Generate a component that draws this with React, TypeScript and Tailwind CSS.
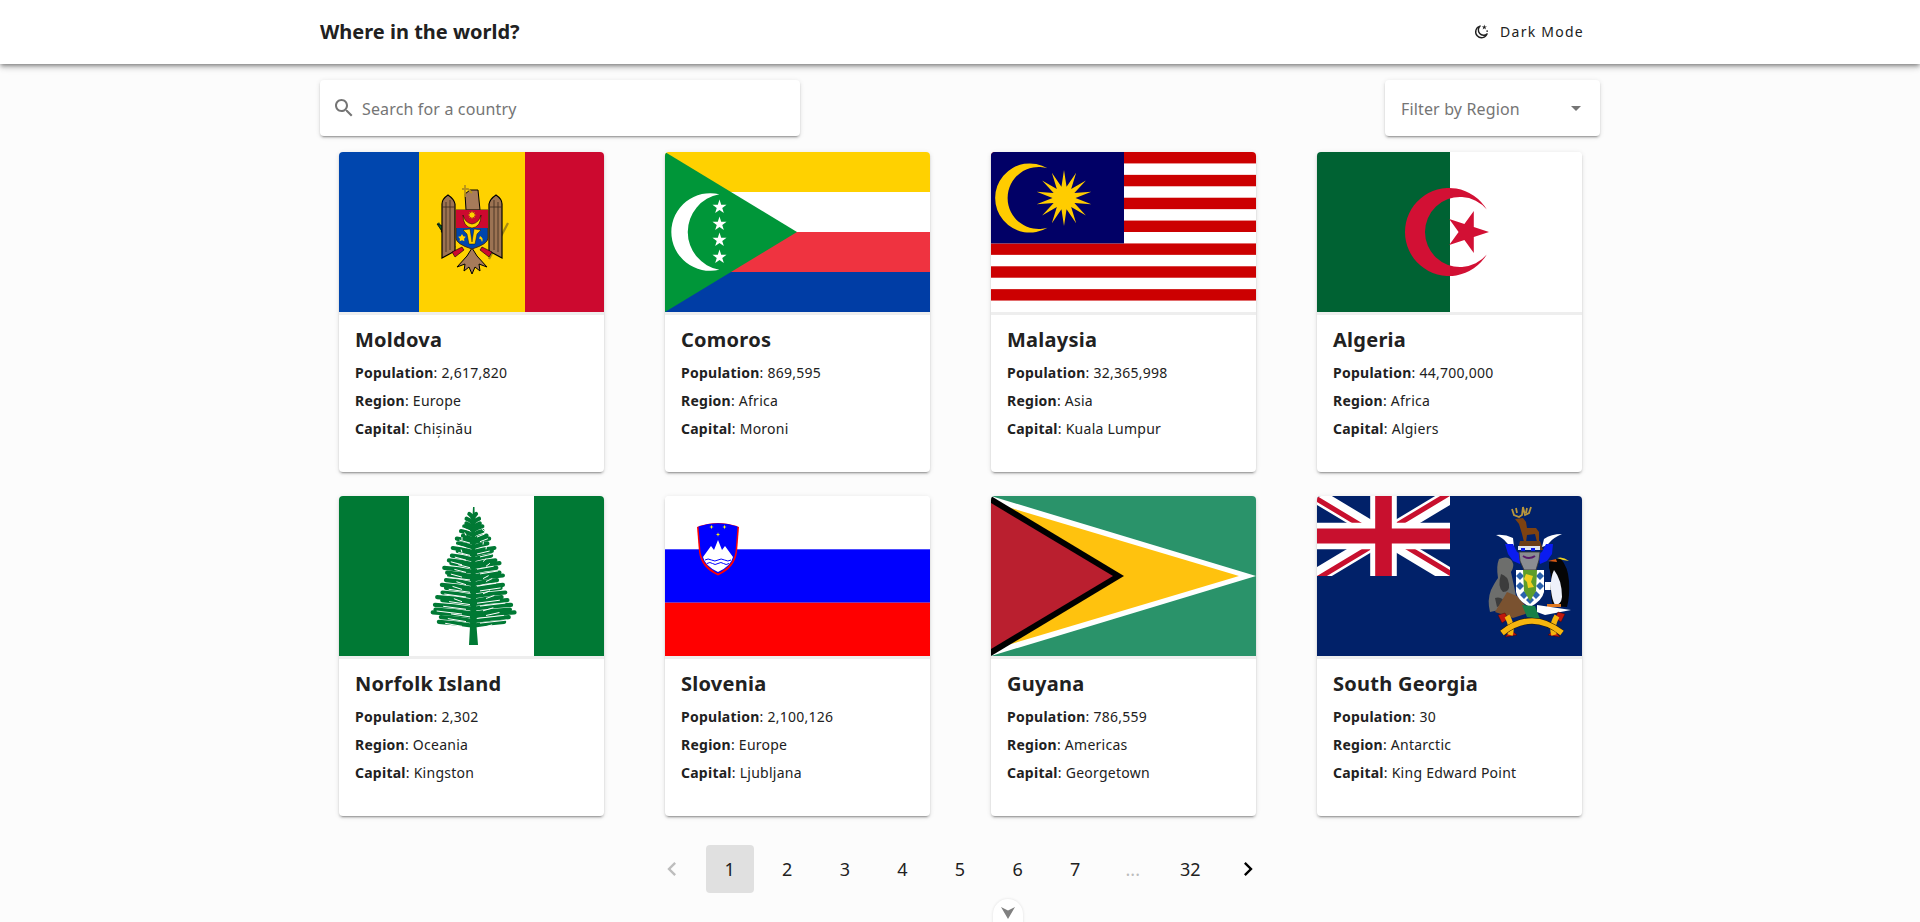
import type { ReactNode } from "react";

// all flags are drawn in a 265x160 box, same as the card image
const Flag = ({ children }: { children: ReactNode }) => (
  <svg viewBox="0 0 265 160" className="block w-[265px] h-[160px]">
    {children}
  </svg>
);

const star = (cx: number, cy: number, R: number, r: number, n: number, rot = -90) => {
  const pts: string[] = [];
  for (let i = 0; i < n * 2; i++) {
    const a = ((rot + (i * 180) / n) * Math.PI) / 180;
    const d = i % 2 === 0 ? R : r;
    pts.push(`${(cx + d * Math.cos(a)).toFixed(2)},${(cy + d * Math.sin(a)).toFixed(2)}`);
  }
  return pts.join(" ");
};

const MoldovaFlag = () => (
  <Flag>
    <rect width="80" height="160" fill="#0046ae" />
    <rect x="80" width="106" height="160" fill="#ffd200" />
    <rect x="186" width="79" height="160" fill="#cc092f" />
    {/* olive branch and sceptre */}
    <path d="M99 71 L116 100" stroke="#1f4b2a" strokeWidth="2.500" />
    <path d="M98 72l6 2-1 5zM102 79l6 2-1 6zM106 86l6 2-1 6zM110 93l6 1-1 6z" fill="#0b5a2c" stroke="#000" strokeWidth=".6" />
    <path d="M169 71 L150 107" stroke="#a88a10" strokeWidth="2.200" />
    {/* wings */}
    <path d="M103 106 V52 Q103 47 109 43 Q115 47 116 52 V99 Z" fill="#9c7353" stroke="#000" strokeWidth="1.200" />
    <path d="M163 106 V52 Q163 47 157 43 Q151 47 150 52 V99 Z" fill="#9c7353" stroke="#000" strokeWidth="1.200" />
    <path d="M107 50V100M111 48V98M155 48V98M159 50V100M103 55H116M150 55H163" stroke="#3b2a1c" strokeWidth=".8" />
    {/* head and cross */}
    <path d="M126 42 L131 38 L139 38 L141 58 L127 58 Z" fill="#a77b5a" stroke="#000" strokeWidth="1" />
    <path d="M126 33V45M123 37H129L133 41" stroke="#b8941a" strokeWidth="1.800" fill="none" />
    {/* tail */}
    <path d="M118 115 L128 104 L133 96 L138 104 L148 115 L140 112 L141 119 L136 115 L133 122 L130 115 L125 119 L126 112 Z" fill="#a77b5a" stroke="#000" strokeWidth="1" />
    <path d="M113 100l10-5 2 3-9 7zM153 100l-10-5-2 3 9 7z" fill="#cc092f" stroke="#000" strokeWidth=".6" />
    {/* shield */}
    <path d="M117 58 H149 V86 Q149 92 133 97 Q117 92 117 86 Z" fill="#0046ae" stroke="#4a2c14" strokeWidth="1" />
    <path d="M117 58 H149 V76 H117 Z" fill="#cc092f" />
    <path d="M124 63 Q124 75 133 76 Q142 75 142 63 Q140 71 133 72 Q126 71 124 63Z" fill="#ffd200" stroke="#000" strokeWidth=".5" />
    <polygon points={star(133, 63, 4.5, 2.5, 8)} fill="#ffd200" stroke="#a01818" strokeWidth=".5" />
    <path d="M124 78 L131 77 L133 90 L135 77 L142 78 L138 82 L136 92 H130 L128 82 Z" fill="#ffd200" stroke="#000" strokeWidth=".4" />
    <polygon points={star(123, 86, 4, 2.2, 5)} fill="#ffd200" />
    <path d="M141 84 q4 2 2 6 q-1-4-3-3z" fill="#ffd200" />
  </Flag>
);

const ComorosFlag = () => (
  <Flag>
    <rect width="265" height="40" fill="#ffd100" />
    <rect y="40" width="265" height="40" fill="#ffffff" />
    <rect y="80" width="265" height="40" fill="#ef3340" />
    <rect y="120" width="265" height="40" fill="#003da5" />
    <polygon points="0,0 132,80 0,160" fill="#009639" />
    <path d="M54.3 42.3 A38.8 38.8 0 1 0 54.3 117.7 A38.3 38.3 0 0 1 54.3 42.3Z" fill="#fff" />
    {[55, 72, 88, 105].map((y) => (
      <polygon key={y} points={star(54.5, y, 7.4, 2.9, 5)} fill="#fff" />
    ))}
  </Flag>
);

const MalaysiaFlag = () => (
  <Flag>
    <rect width="265" height="160" fill="#fff" />
    {Array.from({ length: 7 }, (_, i) => (
      <rect key={i} y={(i * 160) / 7} width="265" height={160 / 14} fill="#cc0001" />
    ))}
    <rect width="133" height="91.4" fill="#010066" />
    <path d="M56.5 16.3 A34.6 34.6 0 1 0 56.5 75.7 A31 31 0 1 1 56.5 16.3Z" fill="#ffcc00" />
    <polygon points={star(73, 46, 28, 11.5, 14)} fill="#ffcc00" />
  </Flag>
);

const AlgeriaFlag = () => (
  <Flag>
    <rect width="265" height="160" fill="#fff" />
    <rect width="133" height="160" fill="#006233" />
    <path d="M169.8 57.5 A44 44 0 1 0 169.8 102.5 A35 35 0 1 1 169.8 57.5Z" fill="#d21034" />
    <polygon points={star(150, 80, 22, 8.4, 5, 0)} fill="#d21034" />
  </Flag>
);

// half width of the pine at a given height
const treeWidth = (y: number) => {
  const stops = [[11, 1], [27, 7], [44, 15], [61, 21], [71, 25], [84, 27], [97, 30], [114, 39], [127, 33]];
  for (let i = 1; i < stops.length; i++) {
    if (y <= stops[i][0]) {
      const t = (y - stops[i - 1][0]) / (stops[i][0] - stops[i - 1][0]);
      return stops[i - 1][1] + t * (stops[i][1] - stops[i - 1][1]);
    }
  }
  return 33;
};

const NorfolkFlag = () => {
  const jag = [0, 5, -3, 1, 6, -5, 3, -2, 4, -6, 1, 3, -3, 6, 0, -4];
  const rows = Array.from({ length: 27 }, (_, i) => 18 + i * 4.1 + (i % 3) * 0.6);
  return (
    <Flag>
      <rect width="265" height="160" fill="#fff" />
      <rect width="70" height="160" fill="#007934" />
      <rect x="195" width="70" height="160" fill="#007934" />
      <polygon points="134,11 135.500,11 137.500,130 139,149 130,149 131,130 133,30" fill="#007934" />
      {rows.map((y, i) => {
        const k = y > 35 ? 0.6 : 0.2;
        const l = Math.max(3, treeWidth(y) + jag[i % 16] * k);
        const r = Math.max(3, treeWidth(y) + jag[(i + 5) % 16] * k);
        return (
          <g key={i}>
            <path d={`M134 ${y + 4}Q${134 - l / 2} ${y + 1} ${134 - l} ${y}`} stroke="#007934" strokeWidth="4.200" fill="none" strokeLinecap="round" />
            <path d={`M134 ${y + 4}Q${134 + r / 2} ${y + 1} ${134 + r} ${y}`} stroke="#007934" strokeWidth="4.200" fill="none" strokeLinecap="round" />
          </g>
        );
      })}
      {/* light gaps between the branches */}
      {rows.map((y, i) =>
        y > 30 ? (
          <g key={i}>
            <path d={`M${131 - (i % 3) * 4} ${y + 4.5}L${131 - treeWidth(y) * (0.5 + (i % 4) * 0.12)} ${y + 1.5}`} stroke="#fff" strokeWidth="1" />
            <path d={`M${138 + (i % 4) * 3} ${y + 6}L${138 + treeWidth(y) * (0.45 + ((i + 2) % 4) * 0.13)} ${y + 3}`} stroke="#fff" strokeWidth="1" />
          </g>
        ) : null
      )}
    </Flag>
  );
};

const SloveniaFlag = () => (
  <Flag>
    <rect width="265" height="160" fill="#fff" />
    <rect y="53.3" width="265" height="53.4" fill="#0000ff" />
    <rect y="106.7" width="265" height="53.3" fill="#ff0000" />
    <path d="M32 31 Q53 23 74 31 L72 56 Q70 72 53 79.5 Q36 72 34 56 Z" fill="#ff0000" />
    <path d="M33.5 30.5 Q53 24 72.5 30.5 L70.5 56 Q68 70 53 77.5 Q38 70 35.5 56 Z" fill="#0000ff" />
    <path d="M38 61 L46 50 L49 54 L53 44 L57 54 L60 50 L68 61 Q66 70 53 76 Q40 70 38 61 Z" fill="#fff" />
    <path d="M40 64 q3-2 6.500 0 t6.500 0 t6.500 0 t6.500 0M42 67.500 q3-2 5.500 0 t5.500 0 t5.500 0 t5.500 0" stroke="#0000ff" strokeWidth="1" fill="none" />
    <polygon points={star(46.5, 31, 2.2, 0.8, 4)} fill="#ffff00" />
    <polygon points={star(59.5, 31, 2.2, 0.8, 4)} fill="#ffff00" />
    <polygon points={star(53, 38.5, 2.2, 0.8, 4)} fill="#ffff00" />
  </Flag>
);

const GuyanaFlag = () => (
  <Flag>
    <rect width="265" height="160" fill="#2a936a" />
    <polygon points="0,0 265,80 0,160" fill="#fff" />
    <polygon points="0,6 248,80 0,154" fill="#ffc20e" />
    <polygon points="0,0 133,80 0,160" fill="#000" />
    <polygon points="0,7 122,80 0,153" fill="#ba1f2f" />
  </Flag>
);

const SouthGeorgiaFlag = () => (
  <Flag>
    <rect width="265" height="160" fill="#012169" />
    <svg x="0" y="0" width="133" height="80" viewBox="0 0 60 30" preserveAspectRatio="none">
      <clipPath id="jack">
        <path d="M30 15h30v15zv15h-30zh-30v-15zv-15h30z" />
      </clipPath>
      <path d="M0 0L60 30M60 0L0 30" stroke="#fff" strokeWidth="6" />
      <path d="M0 0L60 30M60 0L0 30" stroke="#c8102e" strokeWidth="4" clipPath="url(#jack)" />
      <path d="M30 0V30" stroke="#fff" strokeWidth="12" />
      <path d="M0 15H60" stroke="#fff" strokeWidth="10" />
      <path d="M30 0V30" stroke="#c8102e" strokeWidth="7.500" />
      <path d="M0 15H60" stroke="#c8102e" strokeWidth="5.600" />
    </svg>
    {/* reindeer */}
    <path d="M195 13l2 6 5 2 3-2 1-8 2 8 4-2 2-6M199 12l1 5M210 12l-1 5" stroke="#b8963c" strokeWidth="1.800" fill="none" />
    <path d="M198 23l8-1 3 4 1 6 9 0 3 4v10h-2l-2-8-8 1-1 7h-2l-2-8-3-10z" fill="#7e4210" />
    <path d="M203 45h20l3 9h-25z" fill="#6b3d18" />
    {/* wings and mantling */}
    <path d="M179 39q9-1 17 3l1 9q-5-1-8-5t-10-7z" fill="#fff" />
    <path d="M245 38q-11 0-18 5l-2 8q5-1 8-5t12-8z" fill="#fff" />
    <path d="M188 48h8l4 8 5 2-2 10-7-3-5-7z" fill="#0a1cf0" />
    <path d="M236 48h-7l-4 8-4 2 2 10 7-3 5-7z" fill="#0a1cf0" />
    <path d="M201 50h22v4h-22z" fill="#dfe4ee" />
    <path d="M204 52h4v3h-4zM214 52h4v3h-4z" fill="#0a1cf0" />
    {/* helmet */}
    <path d="M202 56h21l-1 8-3 10h-12l-4-9z" fill="#8a8d92" stroke="#333" strokeWidth=".8" />
    <path d="M206 60q6 4 12 0" stroke="#5a1a6a" strokeWidth="2" fill="none" />
    {/* seal */}
    <path d="M182 63q9-4 13 2 3 5-1 11l3 14 4 20-28 6q-3-12 1-22 4-8 7-12-2-12 1-19z" fill="#6d6e6c" />
    <path d="M184 78q7 2 8 10t-6 8q-6-5-2-18zM178 102q8-2 10 6l-8 3z" fill="#3c3c3c" />
    {/* tussock */}
    <path d="M178 116l12-20 10 4 14 16-18 6z" fill="#7a5230" />
    {/* shield */}
    <path d="M199 74h28v22q-2 9-14 15-12-6-14-15z" fill="#fff" />
    {[[203, 80], [203, 90], [207, 99], [223, 80], [223, 90], [219, 99], [213, 104]].map(([x, y]) => (
      <path key={`${x}${y}`} d={`M${x} ${y - 4}l4 4-4 4-4-4z`} fill="#2a62ad" />
    ))}
    <path d="M206 74h14l-1 21-6 10-6-10z" fill="#5d9d2a" />
    <path d="M209 78l7 2-2 6 3 5-6 1-1-6-3-3z" fill="#f0cf20" />
    <path d="M205 109l13 1 5 13-13-2z" fill="#178048" />
    {/* penguin */}
    <path d="M228 86h6v8h-6z" fill="#fff" />
    <path d="M232 66l6-3 6 0q7 8 8 22 1 15-2 26l-14-1q-3-10-2-24 0-10-2-14z" fill="#050505" />
    <path d="M237 74q-4 8-3 20 1 10 4 15 6 0 7-8 0-17-8-27z" fill="#eef1fa" />
    <path d="M231 65l8-2 1 3z" fill="#d85a14" />
    <path d="M240 62q6-2 12 3l-6-1z" fill="#ecd020" />
    <path d="M230 108h14v3h-14z" fill="#e07820" />
    <path d="M220 109l34 5-26 5-8-3z" fill="#fff" />
    {/* motto */}
    <path d="M181 119l7-2 3 6-6 4zM248 118l-7-2-3 6 6 4zM188 141l6-7 6 5zM243 141l-6-7-6 5z" fill="#c0180c" stroke="#300" strokeWidth=".4" />
    <path d="M190 120q6 10 3 19M240 120q-6 10-3 19" stroke="#f5b50f" strokeWidth="5.500" fill="none" />
    <path d="M185 137Q215 113 245 137" stroke="#2a1a00" strokeWidth="6.500" fill="none" />
    <path d="M185 137Q215 113 245 137" stroke="#f5b50f" strokeWidth="5.500" fill="none" />
  </Flag>
);

const COUNTRIES = [
  { name: "Moldova", population: "2,617,820", region: "Europe", capital: "Chișinău", flag: <MoldovaFlag /> },
  { name: "Comoros", population: "869,595", region: "Africa", capital: "Moroni", flag: <ComorosFlag /> },
  { name: "Malaysia", population: "32,365,998", region: "Asia", capital: "Kuala Lumpur", flag: <MalaysiaFlag /> },
  { name: "Algeria", population: "44,700,000", region: "Africa", capital: "Algiers", flag: <AlgeriaFlag /> },
  { name: "Norfolk Island", population: "2,302", region: "Oceania", capital: "Kingston", flag: <NorfolkFlag /> },
  { name: "Slovenia", population: "2,100,126", region: "Europe", capital: "Ljubljana", flag: <SloveniaFlag /> },
  { name: "Guyana", population: "786,559", region: "Americas", capital: "Georgetown", flag: <GuyanaFlag /> },
  { name: "South Georgia", population: "30", region: "Antarctic", capital: "King Edward Point", flag: <SouthGeorgiaFlag /> },
];

const PAGES = ["1", "2", "3", "4", "5", "6", "7"];

const PaperShadow = "shadow-[0_3px_1px_-2px_rgba(0,0,0,0.2),0_2px_2px_0_rgba(0,0,0,0.14),0_1px_5px_0_rgba(0,0,0,0.12)]";

const PageIcon = ({ d }: { d: string }) => (
  <svg viewBox="0 0 24 24" className="w-7 h-7" fill="currentColor">
    <path d={d} />
  </svg>
);

const Fact = ({ label, value }: { label: string; value: string }) => (
  <p className="text-[14px] leading-[28px] tracking-[0.25px] text-[#212121]">
    <span className="font-bold">{label}</span>: {value}
  </p>
);

const CountryCard = ({ country }: { country: (typeof COUNTRIES)[number] }) => (
  <div className={`w-[265px] h-[320px] bg-white rounded-[4px] overflow-hidden ${PaperShadow}`}>
    {country.flag}
    <div className="h-[3px] bg-[#eeeeee]" />
    <div className="px-4 pt-[11px]">
      <h2 className="text-[20px] leading-[28px] tracking-[0.25px] font-bold text-[#212121] mb-[5px]">{country.name}</h2>
      <Fact label="Population" value={country.population} />
      <Fact label="Region" value={country.region} />
      <Fact label="Capital" value={country.capital} />
    </div>
  </div>
);

const App = () => (
  <div className="relative h-screen overflow-hidden bg-[#fcfcfc] font-['Noto_Sans',sans-serif]">
    {/* App bar */}
    <header className="h-16 bg-white shadow-[0_2px_4px_-1px_rgba(0,0,0,0.4),0_4px_5px_0_rgba(0,0,0,0.14),0_1px_10px_0_rgba(0,0,0,0.12)]">
      <div className="w-[1280px] h-full mx-auto flex items-center justify-between">
        <h1 className="text-[20px] font-bold text-[#212121]">Where in the world?</h1>
        <button className="flex items-center gap-[11px] pr-4 pb-[2px] text-[14px] tracking-[1.25px] text-[#212121]">
          <svg viewBox="0 0 16 16" className="w-[15px] h-[15px]" fill="none">
            <path d="M6.500 2.200A6.300 6.300 0 1 0 14 10.500A5.200 5.200 0 0 1 6.500 2.200Z" stroke="#212121" strokeWidth="1.500" strokeLinejoin="round" />
            <polygon points={star(11, 3.500, 3, 1.1, 5)} fill="#212121" />
            <circle cx="14" cy="7.500" r=".9" fill="#212121" />
          </svg>
          <span>Dark Mode</span>
        </button>
      </div>
    </header>

    <main className="w-[1280px] mx-auto pt-4">
      {/* Search and filter */}
      <div className="flex justify-between h-14">
        <div className={`w-[480px] bg-white rounded-[4px] flex items-center pl-3 gap-[6px] ${PaperShadow}`}>
          <svg viewBox="0 0 24 24" className="w-6 h-6" fill="#757575">
            <path d="M15.5 14h-.79l-.28-.27C15.41 12.59 16 11.11 16 9.5 16 5.91 13.09 3 9.5 3S3 5.91 3 9.5 5.91 16 9.5 16c1.61 0 3.09-.59 4.23-1.57l.27.28v.79l5 4.99L20.49 19l-4.99-5zm-6 0C7.01 14 5 11.99 5 9.5S7.01 5 9.5 5 14 7.01 14 9.5 11.99 14 9.5 14z" />
          </svg>
          <input
            placeholder="Search for a country"
            className="flex-1 pt-[2px] bg-transparent outline-none text-[16px] tracking-[0.15px] placeholder:text-[#757575]"
          />
        </div>
        <div className={`w-[215px] bg-white rounded-[4px] flex items-center justify-between pl-4 pr-[19px] ${PaperShadow}`}>
          <span className="pt-[2px] text-[16px] tracking-[0.15px] text-[#757575]">Filter by Region</span>
          <span className="w-0 h-0 border-x-[5px] border-x-transparent border-t-[5px] border-t-[#757575]" />
        </div>
      </div>

      {/* Cards */}
      <div className="mt-4 px-[19px] grid grid-cols-[repeat(4,265px)] gap-x-[61px] gap-y-6">
        {COUNTRIES.map((c) => (
          <CountryCard key={c.name} country={c} />
        ))}
      </div>

      {/* Pagination */}
      <nav className="mt-[29px] flex justify-center gap-[9.6px] text-[18px] text-[#212121]">
        <span className="w-12 h-12 flex items-center justify-center text-[#bdbdbd]">
          <PageIcon d="M15.41 7.41 14 6l-6 6 6 6 1.41-1.41L10.830 12z" />
        </span>
        {PAGES.map((p) => (
          <span
            key={p}
            className={`w-12 h-12 flex items-center justify-center rounded-[4px] ${p === "1" ? "bg-[#e0e0e0]" : ""}`}
          >
            {p}
          </span>
        ))}
        <span className="w-12 h-12 flex items-center justify-center text-[#bdbdbd]">...</span>
        <span className="w-12 h-12 flex items-center justify-center">32</span>
        <span className="w-12 h-12 flex items-center justify-center text-black">
          <PageIcon d="M10 6 8.590 7.410 13.170 12l-4.580 4.590L10 18l6-6z" />
        </span>
      </nav>
    </main>

    {/* Scroll down hint, sits over the page edge */}
    <div className="absolute left-[993px] top-[899px] w-[30px] h-10 bg-white rounded-full shadow-[0_0_3px_rgba(0,0,0,0.12)] flex justify-center pt-2">
      <svg viewBox="0 0 14 12" className="w-[14px] h-[12px]">
        <path d="M0 0L7 3.500L14 0L7 12Z" fill="#808080" />
      </svg>
    </div>
  </div>
);

export default App;
